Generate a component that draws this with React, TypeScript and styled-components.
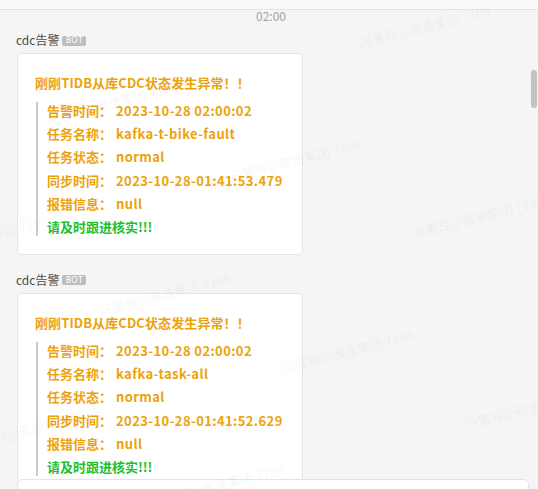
import React from 'react';
import styled, { createGlobalStyle } from 'styled-components';

type Field = { label: string; value: string };

type Alert = {
  sender: string;
  title: string;
  fields: Field[];
  footer: string;
};

const alerts: Alert[] = [
  {
    sender: 'cdc告警',
    title: '刚刚TIDB从库CDC状态发生异常！！',
    fields: [
      { label: '告警时间：', value: '2023-10-28 02:00:02' },
      { label: '任务名称：', value: 'kafka-t-bike-fault' },
      { label: '任务状态：', value: 'normal' },
      { label: '同步时间：', value: '2023-10-28-01:41:53.479' },
      { label: '报错信息：', value: 'null' },
    ],
    footer: '请及时跟进核实!!!',
  },
  {
    sender: 'cdc告警',
    title: '刚刚TIDB从库CDC状态发生异常！！',
    fields: [
      { label: '告警时间：', value: '2023-10-28 02:00:02' },
      { label: '任务名称：', value: 'kafka-task-all' },
      { label: '任务状态：', value: 'normal' },
      { label: '同步时间：', value: '2023-10-28-01:41:52.629' },
      { label: '报错信息：', value: 'null' },
    ],
    footer: '请及时跟进核实!!!',
  },
];

// watermark tiles repeat on a skewed lattice
const markOrigin = { x: 48, y: 126 };
const markStepA = { x: 183, y: 57 };
const markStepB = { x: 53, y: 191 };

const watermarks: { x: number; y: number }[] = [];
for (let i = -3; i <= 3; i++) {
  for (let j = -2; j <= 3; j++) {
    const x = markOrigin.x + i * markStepA.x + j * markStepB.x;
    const y = markOrigin.y + i * markStepA.y + j * markStepB.y;
    if (x > -170 && x < 540 && y > 0 && y < 540) watermarks.push({ x, y });
  }
}

const App: React.FC = () => {
  return (
    <>
      <GlobalStyle />
      <Page>
        <TopBar />
        <ChatArea>
          <TimeStamp>02:00</TimeStamp>
          {alerts.map((alert, index) => (
            <Message key={index}>
              <SenderRow>
                <SenderName>{alert.sender}</SenderName>
                <BotTag>BOT</BotTag>
              </SenderRow>
              <Card>
                <CardTitle>{alert.title}</CardTitle>
                <Quote>
                  {alert.fields.map((field) => (
                    <Line key={field.label}>
                      <Label>{field.label}</Label>
                      <Value>{field.value}</Value>
                    </Line>
                  ))}
                  <Line $tone="green">{alert.footer}</Line>
                </Quote>
              </Card>
            </Message>
          ))}
          <ScrollThumb />
        </ChatArea>
        <Composer />
        <MarkLayer>
          {watermarks.map((m) => (
            <Mark key={`${m.x}-${m.y}`} style={{ left: m.x, top: m.y - 13 }}>
              冯署辉@雅迪集团 7198
            </Mark>
          ))}
        </MarkLayer>
      </Page>
    </>
  );
};

export default App;

const GlobalStyle = createGlobalStyle`
  html, body {
    margin: 0;
    padding: 0;
    background: #f5f5f5;
    overflow: hidden;
  }
  * {
    box-sizing: border-box;
  }
`;

const Page = styled.div`
  position: relative;
  width: 538px;
  height: 489px;
  overflow: hidden;
  display: flex;
  flex-direction: column;
  background: #f5f5f5;
  font-family: 'Noto Sans CJK SC', 'Noto Sans', sans-serif;
`;

const TopBar = styled.div`
  flex: 0 0 10px;
  background: #f9f9f9;
  border-bottom: 1px solid #e2e2e2;
`;

const ChatArea = styled.div`
  position: relative;
  flex: 0 0 469px;
  overflow: hidden;
`;

const TimeStamp = styled.div`
  height: 12px;
  line-height: 12px;
  text-align: center;
  font-size: 12px;
  color: #a3a3a3;
  padding-left: 4px;
`;

const Message = styled.div`
  padding: 10px 0 0 16px;

  & + & {
    padding-top: 17px;
  }
`;

const SenderRow = styled.div`
  display: flex;
  align-items: center;
  gap: 3px;
  height: 16px;
  margin-bottom: 5px;
`;

const SenderName = styled.span`
  font-size: 12px;
  color: #4d4d4d;
  line-height: 16px;
`;

const BotTag = styled.span`
  display: inline-flex;
  align-items: center;
  justify-content: center;
  width: 24px;
  height: 10px;
  margin-top: 1px;
  border-radius: 2px;
  background: #bdbdbd;
  color: #fff;
  font-family: 'DejaVu Sans', sans-serif;
  font-size: 8px;
  letter-spacing: 0.3px;
`;

const Card = styled.div`
  width: 286px;
  margin-left: 1px;
  padding: 20px 16px 18px 17px;
  background: #fff;
  border: 1px solid #e6e6e6;
  border-radius: 5px;
`;

const CardTitle = styled.div`
  font-size: 13px;
  font-weight: 700;
  line-height: 18px;
  color: #eda20c;
  margin-bottom: 10px;
  letter-spacing: 0.1px;
`;

const Quote = styled.div`
  margin-left: 1px;
  padding-left: 9px;
  border-left: 2px solid #c7cbd3;
  display: flex;
  flex-direction: column;
  gap: 5.2px;
`;

const Line = styled.div<{ $tone?: 'green' }>`
  display: flex;
  font-size: 13px;
  font-weight: 700;
  line-height: 18px;
  white-space: nowrap;
  color: ${(p) => (p.$tone === 'green' ? '#1bc02d' : '#eda20c')};
`;

const Label = styled.span`
  width: 69px;
  flex-shrink: 0;
`;

const Value = styled.span`
  letter-spacing: 0.4px;
`;

const ScrollThumb = styled.div`
  position: absolute;
  right: 1px;
  top: 60px;
  width: 6px;
  height: 38px;
  border-radius: 3px;
  background: #c2c3c7;
`;

const Composer = styled.div`
  flex: 0 0 120px;
  margin: 0 9px 0 17px;
  background: #fff;
  border: 1px solid #e3e3e3;
  border-radius: 6px;
`;

const MarkLayer = styled.div`
  position: absolute;
  inset: 0;
  pointer-events: none;
`;

const Mark = styled.span`
  position: absolute;
  white-space: nowrap;
  font-size: 13px;
  line-height: 13px;
  color: rgba(0, 0, 0, 0.05);
  transform: rotate(-14.5deg);
  transform-origin: left bottom;
`;
